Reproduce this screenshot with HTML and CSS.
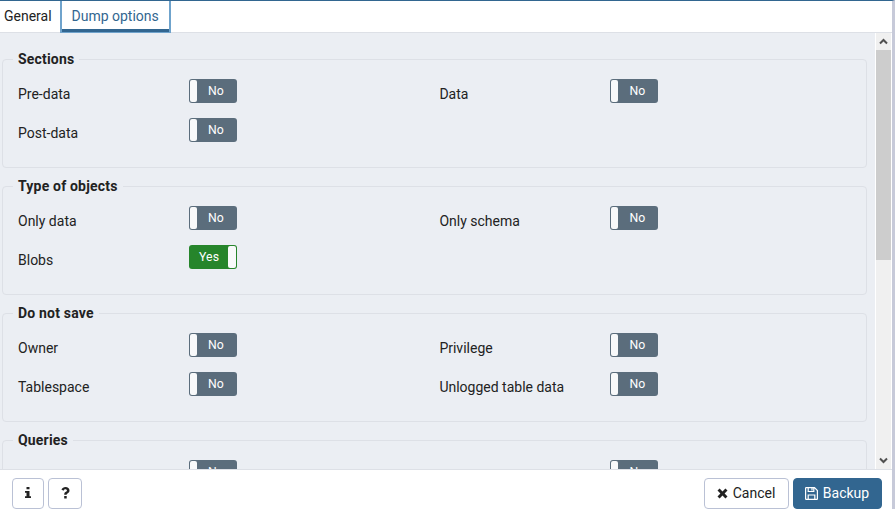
FILE: index.html
```html
<!DOCTYPE html>
<html lang="en">
<head>
<meta charset="utf-8">
<title>Backup</title>
<link rel="stylesheet" href="styles.css">
</head>
<body>
<div class="dialog">
  <nav class="tabs">
    <div class="tab">General</div>
    <div class="tab active">Dump options</div>
  </nav>
  <div class="body">
    <main class="content">
      <section class="group">
        <h2>Sections</h2>
        <div class="grid">
          <div class="field"><label>Pre-data</label><span class="switch"><i></i><b>No</b></span></div>
          <div class="field"><label>Data</label><span class="switch"><i></i><b>No</b></span></div>
          <div class="field"><label>Post-data</label><span class="switch"><i></i><b>No</b></span></div>
        </div>
      </section>
      <section class="group">
        <h2>Type of objects</h2>
        <div class="grid">
          <div class="field"><label>Only data</label><span class="switch"><i></i><b>No</b></span></div>
          <div class="field"><label>Only schema</label><span class="switch"><i></i><b>No</b></span></div>
          <div class="field"><label>Blobs</label><span class="switch on"><b>Yes</b><i></i></span></div>
        </div>
      </section>
      <section class="group">
        <h2>Do not save</h2>
        <div class="grid">
          <div class="field"><label>Owner</label><span class="switch"><i></i><b>No</b></span></div>
          <div class="field"><label>Privilege</label><span class="switch"><i></i><b>No</b></span></div>
          <div class="field"><label>Tablespace</label><span class="switch"><i></i><b>No</b></span></div>
          <div class="field"><label>Unlogged table data</label><span class="switch"><i></i><b>No</b></span></div>
        </div>
      </section>
      <section class="group">
        <h2>Queries</h2>
        <div class="grid">
          <div class="field"><label></label><span class="switch"><i></i><b>No</b></span></div>
          <div class="field"><label></label><span class="switch"><i></i><b>No</b></span></div>
        </div>
      </section>
    </main>
    <div class="scrollbar">
      <svg class="arrow" viewBox="0 0 15 17"><path d="M4 10.500 7.500 7l3.500 3.500" /></svg>
      <div class="thumb"></div>
      <svg class="arrow end" viewBox="0 0 15 17"><path d="M4 6.500 7.500 10 11 6.500" /></svg>
    </div>
  </div>
  <footer class="footer">
    <button class="btn info" aria-label="Info"><svg width="8" height="12" viewBox="0 0 8 12"><path d="M2.500 0h3v2.300h-3zM1 4h4.500v5.200H7V11H1V9.200h1.500V5.800H1z"/></svg></button>
    <button class="btn help" aria-label="Help"><svg width="9" height="12" viewBox="0 0 9 12"><path d="M.4 2.600C1.300.9 2.700 0 4.500 0 6.800 0 8.500 1.500 8.500 3.400c0 1.500-.8 2.200-1.700 2.800-.9.600-1.100.8-1.100 1.600H3.200c0-1.700.5-2.400 1.600-3 .8-.5 1.100-.7 1.100-1.300S5.300 2.300 4.500 2.300c-.9 0-1.400.5-2 1.400zM3.200 9h2.500v2.400H3.200z"/></svg></button>
    <span class="spacer"></span>
    <button class="btn cancel"><svg width="11" height="11" viewBox="0 0 11 11"><path d="M2.600.5 5.500 3.400 8.400.5l2.100 2.100L7.600 5.500l2.900 2.900-2.100 2.100-2.900-2.900-2.900 2.900L.5 8.400l2.900-2.900L.5 2.600z"/></svg>Cancel</button>
    <button class="btn primary"><svg width="13" height="13" viewBox="0 0 13 13"><path class="line" d="M.6 1.200q0-.6.600-.6h8.300l2.900 2.900v8.300q0 .6-.6.600H1.200q-.6 0-.6-.6zM3.200.8v3.700h5.600V.8M7 1v2.500M3.200 12.200V8h6.600v4.200"/></svg>Backup</button>
  </footer>
</div>
</body>
</html>
```
FILE: styles.css
```css
* { box-sizing: border-box; }

body {
  margin: 0;
  font-family: Roboto, sans-serif;
  font-size: 14px;
  line-height: 21px;
  color: #222;
  overflow: hidden;
}

.dialog {
  width: 895px;
  height: 509px;
  display: flex;
  flex-direction: column;
  background: #fff;
  border-top: 1px solid #326690;
  border-right: 3px solid #c7cad9;
}

.tabs {
  display: flex;
  height: 32px;
  flex: none;
  border-bottom: 1px solid #dde0e6;
}

.tab {
  width: 60px;
  height: 32px;
  padding: 5px 0 0 4px;
  white-space: nowrap;
}

.tab.active {
  width: 111px;
  padding: 5px 0 0 9.500px;
  color: #326690;
  border: solid #6fa3cc;
  border-width: 0 2px 1px;
  box-shadow: inset 0 -3px #326690;
}

.body {
  display: flex;
  height: 436px;
  flex: none;
  background: #ebeef3;
  overflow: hidden;
}

.content {
  width: 875px;
  padding: 26px 8px 0 2px;
}

.group {
  width: 865px;
  height: 109px;
  margin-bottom: 18px;
  border: 1px solid #dde0e6;
  border-radius: 4px;
}

h2 {
  width: max-content;
  height: 20px;
  margin: -11px 0 0 10px;
  padding: 0 5px;
  background: #ebeef3;
  font-size: 14px;
  font-weight: 700;
  letter-spacing: 0.190px;
  line-height: 21px;
}

.grid {
  display: grid;
  grid-template-columns: 421.400px 421.400px;
  grid-auto-rows: 39px;
  padding: 10px 0 0 15px;
}

.field { display: flex; }

label {
  width: 171px;
  padding-top: 5px;
}

.switch {
  display: flex;
  width: 48px;
  height: 24px;
  padding: 1px;
  background: #5b6d7c;
  border-radius: 3px;
}

.switch i {
  width: 7px;
  background: #f8f9fa;
  border-radius: 2px;
}

.switch b {
  flex: 1;
  padding-right: 1px;
  font-size: 12.250px;
  font-weight: 400;
  letter-spacing: 0.150px;
  line-height: 22px;
  text-align: center;
  color: #fff;
}

.switch.on { background: #26852b; }
.switch.on i { width: 8px; }
.switch.on b { padding-right: 0; }

.scrollbar {
  display: flex;
  flex-direction: column;
  width: 17px;
  border-left: 1px solid #fff;
  border-right: 1px solid #fff;
  background: #f0f0f0;
}

.arrow { width: 15px; height: 17px; flex: none; }
.arrow path { fill: none; stroke: #505050; stroke-width: 2; }
.arrow.end { margin-top: auto; }
.thumb { height: 210px; background: #cdcdcd; }

.footer {
  display: flex;
  flex: 1;
  align-items: flex-start;
  padding: 8px 10px 0 12px;
  border-top: 1px solid #dde0e6;
}

.btn {
  display: flex;
  align-items: center;
  justify-content: center;
  height: 31px;
  padding: 0;
  border: 1px solid #bac1d5;
  border-radius: 4px;
  background: #fff;
  color: #222;
  font: 14px/21px Roboto, sans-serif;
}

.btn svg { fill: #222; }
.info { width: 32px; padding-bottom: 2px; }
.help { width: 34px; margin-left: 4px; padding-bottom: 1px; }
.spacer { flex: 1; }
.cancel { width: 85px; gap: 5px; padding-right: 1px; }
.primary {
  width: 89px;
  margin-left: 4px;
  gap: 5px;
  padding-right: 1px;
  color: #fff;
  background: #326690;
  border-color: #326690;
}
.primary .line { fill: none; stroke: #fff; stroke-width: 1.200; }
```
